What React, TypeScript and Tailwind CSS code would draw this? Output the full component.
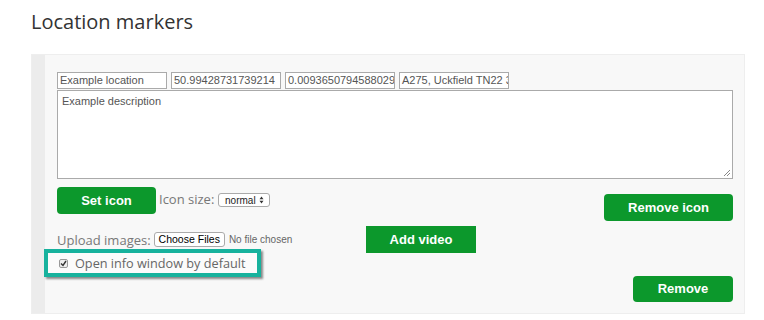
import React from "react";

const sans = { fontFamily: '"Open Sans", "Liberation Sans", sans-serif' };
const arial = { fontFamily: '"Liberation Sans", Arial, sans-serif' };

export default function App() {
  return (
    <div className="w-[764px] h-[320px] bg-white overflow-hidden relative" style={sans}>
      <h1 className="ml-[31px] pt-[8px] text-[20px] leading-[28px] text-[#333] font-normal">Location markers</h1>
      <div className="ml-[31px] mt-[18px] w-[714px] h-[260px] flex bg-[#f8f8f8] border border-[#eeeeee]">
        <div className="w-[13px] bg-[#ececec] shrink-0" />
        <div className="flex flex-col pl-[12px] w-[688px]">
          <div className="mt-[17px] flex gap-[4px]">
            {["Example location", "50.99428731739214", "0.009365079458802929", "A275, Uckfield TN22 3"].map((v, i) => (
              <div
                key={i}
                className="w-[110px] h-[17px] bg-white border border-[#aaaaaa] px-[2px] text-[11px] leading-[15px] text-[#555] whitespace-nowrap overflow-hidden"
                style={arial}
              >
                {v}
              </div>
            ))}
          </div>
          <div
            className="mt-[1px] w-[676px] h-[89px] bg-white border border-[#aaaaaa] px-[4px] py-[3px] text-[11px] leading-[15px] text-[#555] relative"
            style={arial}
          >
            Example description
            <svg className="absolute right-[1px] bottom-[1px]" width="8" height="8" viewBox="0 0 8 8">
              <path d="M7 1 L1 7 M7 4 L4 7" stroke="#888" strokeWidth="1" />
            </svg>
          </div>
          <div className="flex items-start w-[676px]">
            <button className="mt-[8px] w-[99px] h-[27px] bg-[#0c982c] rounded-[4px] text-white text-[13px] font-bold" style={arial}>
              Set icon
            </button>
            <span className="ml-[3px] mt-[11px] text-[13px] leading-[18px] text-[#777]">Icon size:</span>
            <div
              className="ml-[4px] mt-[14px] w-[52px] h-[14px] bg-white border border-[#aaaaaa] rounded-[3px] flex items-center justify-center gap-[3px] text-[10px] text-[#222]"
              style={arial}
            >
              <span>normal</span>
              <svg width="5" height="8" viewBox="0 0 5 8">
                <path d="M0.5 3.2 L2.5 0.5 L4.5 3.2 Z M0.5 4.8 L2.5 7.5 L4.5 4.8 Z" fill="#333" />
              </svg>
            </div>
            <button className="ml-auto mt-[15px] w-[129px] h-[27px] bg-[#0c982c] rounded-[4px] text-white text-[13px] font-bold" style={arial}>
              Remove icon
            </button>
          </div>
          <div className="mt-[5px] flex items-center">
            <div className="w-[309px] flex items-center">
              <span className="text-[13px] leading-[18px] text-[#777]">Upload images:</span>
              <div
                className="ml-[3px] h-[15px] px-[4px] bg-white border border-[#aaaaaa] rounded-[3px] text-[10.5px] leading-[13px] text-black"
                style={arial}
              >
                Choose Files
              </div>
              <span className="ml-[4px] text-[10px] text-[#666]" style={arial}>
                No file chosen
              </span>
            </div>
            <button className="w-[110px] h-[27px] bg-[#0c982c] text-white text-[13px] font-bold" style={arial}>
              Add video
            </button>
          </div>
          <div className="-mt-[4px] -ml-[13px] w-[217px] h-[28px] border-[4px] border-[#17b29d] bg-[#fbfbfb] shadow-[2px_2px_2px_rgba(0,0,0,0.45)] flex items-center pl-[11px]">
            <div className="w-[9px] h-[9px] bg-[#eee] border border-[#999] rounded-[2px] flex items-center justify-center">
              <svg width="7" height="7" viewBox="0 0 7 7">
                <path d="M1 3.5 L3 5.5 L6 1" stroke="#333" strokeWidth="1.4" fill="none" />
              </svg>
            </div>
            <span className="ml-[7px] text-[12.7px] leading-[18px] text-[#666]">Open info window by default</span>
          </div>
          <div className="-mt-[1px] flex w-[676px]">
            <button className="ml-auto w-[100px] h-[26px] bg-[#0c982c] rounded-[4px] text-white text-[13px] font-bold" style={arial}>
              Remove
            </button>
          </div>
        </div>
      </div>
    </div>
  );
}
